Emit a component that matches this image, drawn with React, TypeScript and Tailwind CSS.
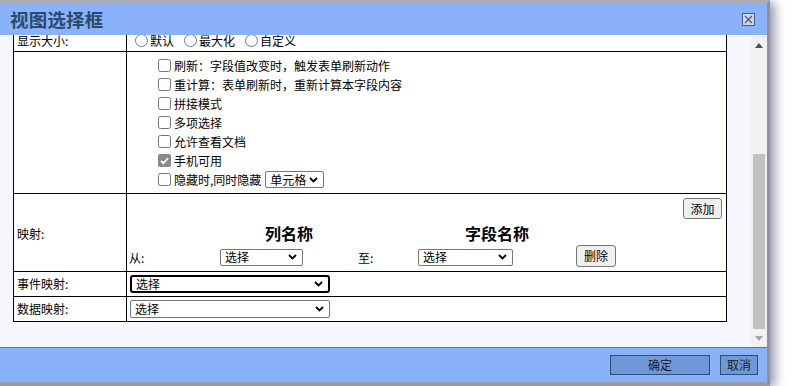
import React from "react";

const Chevron: React.FC = () => (
  <svg width="9" height="6" viewBox="0 0 9 6" className="shrink-0">
    <path d="M1 1l3.5 3.5L8 1" fill="none" stroke="#000" strokeWidth="1.8" />
  </svg>
);

interface SelectProps {
  label: string;
  className?: string;
  focused?: boolean;
}

const FakeSelect: React.FC<SelectProps> = ({ label, className = "", focused }) => (
  <div
    className={`flex items-center justify-between bg-white pl-[4px] pr-[5px] text-[12px] leading-none ${
      focused ? "border-2 border-black rounded-[3px]" : "border border-[#767676] rounded-[2px]"
    } ${className}`}
  >
    <span>{label}</span>
    <Chevron />
  </div>
);

const Btn: React.FC<{ label: string; className?: string }> = ({ label, className = "" }) => (
  <div
    className={`flex items-center justify-center bg-[#efefef] border border-[#767676] rounded-[3px] text-[12px] leading-none ${className}`}
  >
    {label}
  </div>
);

const CheckedBox: React.FC = () => (
  <svg width="13" height="13" viewBox="0 0 13 13" className="shrink-0">
    <rect x="0" y="0" width="13" height="13" rx="2" fill="#8a8a8a" />
    <path d="M3 6.8l2.4 2.4L10.2 4" fill="none" stroke="#fff" strokeWidth="1.7" />
  </svg>
);

const options = [
  "刷新：字段值改变时，触发表单刷新动作",
  "重计算：表单刷新时，重新计算本字段内容",
  "拼接模式",
  "多项选择",
  "允许查看文档",
];

export default function App() {
  return (
    <div className="w-[793px] h-[386px] bg-white overflow-hidden font-['Noto_Sans_CJK_SC','Microsoft_YaHei',sans-serif] text-black">
      <div className="w-[770px] h-[386px] flex flex-col border-t-[3px] border-r-[3px] border-b-[4px] border-t-[#acacb4] border-r-[#8e8ea4] border-b-[#9a9aa2] shadow-[5px_2px_10px_rgba(70,70,110,0.55)]">
        {/* title bar */}
        <div className="h-[32px] bg-[#89b2f9] flex items-center justify-between pl-[10px] pr-[12px]">
          <span className="text-[18.5px] font-bold text-[#2b4a6e] leading-none tracking-[0.2px]">
            视图选择框
          </span>
          <svg width="13" height="13" viewBox="0 0 13 13">
            <rect x="0.5" y="0.5" width="12" height="12" fill="#cdd6ef" stroke="#55597a" />
            <path d="M3 3l7 7M10 3l-7 7" stroke="#55597a" strokeWidth="1.4" />
          </svg>
        </div>

        {/* body */}
        <div className="h-[312px] flex bg-[#f5f7fd]">
          <div className="flex-1 overflow-hidden pl-[13px]">
            <div className="-mt-[9px] w-[714px] border border-black bg-white text-[12px] leading-[16px]">
              {/* 显示大小 */}
              <div className="flex h-[24px]">
                <div className="w-[113px] border-r border-black pl-[3px] pt-[4px] flex items-center">
                  显示大小:
                </div>
                <div className="flex-1 flex items-center pl-[8px] pt-[3px] gap-[10px]">
                  {["默认", "最大化", "自定义"].map((t) => (
                    <label key={t} className="flex items-center gap-[2px]">
                      <input type="radio" name="size" />
                      {t}
                    </label>
                  ))}
                </div>
              </div>

              {/* options */}
              <div className="flex h-[142px] border-t border-black">
                <div className="w-[113px] border-r border-black" />
                <div className="flex-1 pl-[31px] pt-[4px]">
                  {options.map((t) => (
                    <label key={t} className="h-[19px] flex items-center gap-[3px]">
                      <input type="checkbox" />
                      {t}
                    </label>
                  ))}
                  <div className="h-[19px] flex items-center gap-[3px]">
                    <CheckedBox />
                    手机可用
                  </div>
                  <div className="h-[19px] flex items-center gap-[3px]">
                    <input type="checkbox" />
                    <span>隐藏时,同时隐藏</span>
                    <FakeSelect label="单元格" className="w-[59px] h-[17px] ml-[1px]" />
                  </div>
                </div>
              </div>

              {/* 映射 */}
              <div className="flex h-[78px] border-t border-black">
                <div className="w-[113px] border-r border-black pl-[3px] pt-[3px] flex items-center">
                  映射:
                </div>
                <div className="flex-1 pt-[4px] pr-[4px] pl-[2px]">
                  <div className="flex justify-end">
                    <Btn label="添加" className="w-[39px] h-[21px]" />
                  </div>
                  <div className="grid grid-cols-[91px_138px_60px_158px_1fr] mt-[4px]">
                    <div />
                    <div className="text-center text-[16px] font-bold leading-[20px]">列名称</div>
                    <div />
                    <div className="text-center text-[16px] font-bold leading-[20px]">字段名称</div>
                    <div />
                    <div className="h-[22px] mt-[2px] flex items-center pt-[4px]">从:</div>
                    <div className="h-[22px] mt-[2px] flex items-center">
                      <FakeSelect label="选择" className="w-[83px] h-[17px] mt-[2px]" />
                    </div>
                    <div className="h-[22px] mt-[2px] flex items-center pt-[4px]">至:</div>
                    <div className="h-[22px] mt-[2px] flex items-center">
                      <FakeSelect label="选择" className="w-[95px] h-[17px] mt-[2px]" />
                    </div>
                    <div className="h-[22px] mt-[2px] flex items-center">
                      <Btn label="删除" className="w-[40px] h-[22px]" />
                    </div>
                  </div>
                </div>
              </div>

              {/* 事件映射 */}
              <div className="flex h-[25px] border-t border-black">
                <div className="w-[113px] border-r border-black pl-[3px] flex items-center">
                  事件映射:
                </div>
                <div className="flex-1 flex items-center pl-[3px]">
                  <FakeSelect label="选择" focused className="w-[200px] h-[18px]" />
                </div>
              </div>

              {/* 数据映射 */}
              <div className="flex h-[25px] border-t border-black">
                <div className="w-[113px] border-r border-black pl-[3px] flex items-center">
                  数据映射:
                </div>
                <div className="flex-1 flex items-center pl-[3px]">
                  <FakeSelect label="选择" className="w-[200px] h-[18px]" />
                </div>
              </div>
            </div>
          </div>

          {/* scrollbar */}
          <div className="w-[16px] bg-[#f1f1f1] flex flex-col">
            <div className="h-[20px] flex items-center justify-center">
              <svg width="8" height="5" viewBox="0 0 8 5">
                <path d="M0 5L4 0l4 5z" fill="#505050" />
              </svg>
            </div>
            <div className="h-[99px]" />
            <div className="h-[175px] mx-[2px] bg-[#c1c1c1]" />
            <div className="flex-1 flex items-center justify-center">
              <svg width="8" height="5" viewBox="0 0 8 5">
                <path d="M0 0h8L4 5z" fill="#a3a3a3" />
              </svg>
            </div>
          </div>
        </div>

        {/* footer */}
        <div className="flex-1 bg-[#89b2f9] border-t border-[#5676a8] flex items-center justify-end gap-[10px] pr-[9px] text-[12px]">
          <div className="w-[100px] h-[20px] bg-[#6f98d8] border border-[#2d4d7e] flex items-center justify-center leading-none text-[#1b1b1b]">
            确定
          </div>
          <div className="w-[38px] h-[20px] bg-[#6f98d8] border border-[#2d4d7e] flex items-center justify-center leading-none text-[#1b1b1b]">
            取消
          </div>
        </div>
      </div>
    </div>
  );
}
